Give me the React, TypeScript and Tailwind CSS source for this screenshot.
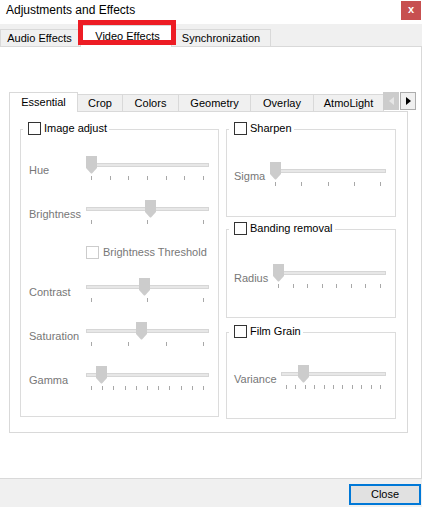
import React from 'react'

interface SliderProps {
  width: number
  widthClass: string
  value: number
  ticks: number
}

function Slider({ width, widthClass, value, ticks }: SliderProps) {
  const left = Math.round(value * (width - 11))
  return (
    <div className={`relative h-[25px] shrink-0 ${widthClass}`}>
      <div className="mt-[7px] h-[4px] border border-[#d6d6d6] bg-[#e7e7e7]" />
      <div className="absolute left-[5px] right-[5px] top-[20px] flex justify-between">
        {Array.from({ length: ticks }).map((_, i) => (
          <div key={i} className="h-[4px] w-px bg-[#a8a8a8]" />
        ))}
      </div>
      <svg className="absolute top-0" style={{ left }} width="11" height="18" viewBox="0 0 11 18">
        <polygon points="0,0 11,0 11,12 6,17.5 5,17.5 0,12" fill="#cccccc" />
      </svg>
    </div>
  )
}

function Row({
  label,
  labelClass,
  children,
}: {
  label: string
  labelClass: string
  children: React.ReactNode
}) {
  return (
    <div className="flex">
      <div className={`shrink-0 pt-[8px] leading-[13px] text-[#777777] ${labelClass}`}>{label}</div>
      {children}
    </div>
  )
}

function Check({ disabled }: { disabled?: boolean }) {
  return (
    <div
      className={`h-[13px] w-[13px] shrink-0 border bg-white ${
        disabled ? 'border-[#cccccc]' : 'border-[#333333]'
      }`}
    />
  )
}

function Group({
  title,
  className,
  children,
}: {
  title: string
  className: string
  children: React.ReactNode
}) {
  return (
    <div className={`relative border border-[#dcdcdc] ${className}`}>
      <div className="absolute -top-[8px] left-[2px] flex h-[13px] items-center gap-[3px] bg-white pl-[5px] pr-[2px]">
        <Check />
        <span className="leading-[13px] text-black">{title}</span>
      </div>
      {children}
    </div>
  )
}

const innerTabs = [
  { name: 'Crop', w: 'w-[45px]' },
  { name: 'Colors', w: 'w-[56px]' },
  { name: 'Geometry', w: 'w-[72px]' },
  { name: 'Overlay', w: 'w-[63px]' },
  { name: 'AtmoLight', w: 'w-[70px]' },
]

export default function App() {
  return (
    <div className="relative flex h-[507px] w-[422px] flex-col overflow-hidden bg-[#f0f0f0] font-['Liberation_Sans',Arial,sans-serif] text-[11px] text-black">
      {/* Title bar */}
      <div className="flex h-[24px] shrink-0 items-start justify-between bg-white pt-[1px]">
        <div className="pl-[6px] pt-[2px] text-[12px] leading-[15px] text-black">Adjustments and Effects</div>
        <div className="mr-[1px] flex h-[19px] w-[20px] items-center justify-center bg-[#c75050] pb-[2px] text-[11px] font-bold leading-none text-white">
          x
        </div>
      </div>

      {/* Top tabs */}
      <div className="flex h-[22px] shrink-0 items-end">
        <div className="flex h-[17px] w-[79px] items-center justify-center border-x border-t border-[#d9d9d9] bg-[#f0f0f0]">
          Audio Effects
        </div>
        <div className="relative z-10 -mb-px ml-px flex h-[22px] w-[92px] items-start justify-center border-x border-t border-[#d9d9d9] bg-white pl-[3px] pt-[4px] leading-[13px]">
          Video Effects
        </div>
        <div className="flex h-[17px] w-[99px] items-center justify-center border-r border-t border-[#d9d9d9] bg-[#f0f0f0]">
          Synchronization
        </div>
      </div>

      {/* Red highlight */}
      <div className="absolute left-[78px] top-[20px] z-20 h-[25px] w-[98px] border-[5px] border-[#ed1c24]" />

      {/* Main panel */}
      <div className="flex h-[433px] shrink-0 flex-col border-y border-r border-[#d9d9d9] bg-white pl-[9px] pt-[45px]">
        {/* Inner tabs */}
        <div className="flex h-[19px] items-end">
          <div className="relative z-10 -mb-px flex h-[20px] w-[69px] items-start justify-center border-x border-t border-[#d9d9d9] bg-white pt-[3px] leading-[13px]">
            Essential
          </div>
          {innerTabs.map((t) => (
            <div
              key={t.name}
              className={`flex h-[17px] items-center justify-center border-r border-t border-[#d9d9d9] bg-[#f0f0f0] ${t.w}`}
            >
              {t.name}
            </div>
          ))}
          <div className="mb-px ml-[-1px] flex h-[18px] w-[16px] items-center justify-center bg-[#cccccc]">
            <svg width="5" height="8" viewBox="0 0 5 8">
              <polygon points="5,0 5,8 0,4" fill="#e6e6e6" />
            </svg>
          </div>
          <div className="mb-px ml-px flex h-[18px] w-[16px] items-center justify-center border border-[#adadad] bg-[#f0f0f0]">
            <svg width="5" height="8" viewBox="0 0 5 8">
              <polygon points="0,0 0,8 5,4" fill="#000000" />
            </svg>
          </div>
        </div>

        {/* Pane */}
        <div className="flex h-[322px] w-[399px] gap-[7px] border border-[#d9d9d9] pl-[10px] pt-[17px]">
          {/* Left group */}
          <Group title="Image adjust" className="h-[288px] w-[199px] shrink-0">
            <div className="flex flex-col gap-[19px] pl-[8px] pt-[26px]">
              <Row label="Hue" labelClass="w-[57px]">
                <Slider width={123} widthClass="w-[123px]" value={0} ticks={7} />
              </Row>
              <Row label="Brightness" labelClass="w-[57px]">
                <Slider width={123} widthClass="w-[123px]" value={0.527} ticks={3} />
              </Row>
              <div className="mt-[2px] flex items-center gap-[4px] pl-[57px]">
                <Check disabled />
                <span className="leading-[13px] text-[#777777]">Brightness Threshold</span>
              </div>
              <Row label="Contrast" labelClass="w-[57px]">
                <Slider width={123} widthClass="w-[123px]" value={0.473} ticks={3} />
              </Row>
              <Row label="Saturation" labelClass="w-[57px]">
                <Slider width={123} widthClass="w-[123px]" value={0.446} ticks={4} />
              </Row>
              <Row label="Gamma" labelClass="w-[57px]">
                <Slider width={123} widthClass="w-[123px]" value={0.09} ticks={11} />
              </Row>
            </div>
          </Group>

          {/* Right groups */}
          <div className="flex w-[170px] shrink-0 flex-col">
            <Group title="Sharpen" className="h-[88px]">
              <div className="pl-[7px] pt-[32px]">
                <Row label="Sigma" labelClass="w-[36px]">
                  <Slider width={116} widthClass="w-[116px]" value={0} ticks={5} />
                </Row>
              </div>
            </Group>
            <Group title="Banding removal" className="mt-[12px] h-[89px]">
              <div className="pl-[7px] pt-[34px]">
                <Row label="Radius" labelClass="w-[39px]">
                  <Slider width={113} widthClass="w-[113px]" value={0} ticks={8} />
                </Row>
              </div>
            </Group>
            <Group title="Film Grain" className="mt-[14px] h-[87px]">
              <div className="pl-[7px] pt-[32px]">
                <Row label="Variance" labelClass="w-[47px]">
                  <Slider width={105} widthClass="w-[105px]" value={0.18} ticks={11} />
                </Row>
              </div>
            </Group>
          </div>
        </div>
      </div>

      {/* Bottom bar */}
      <div className="flex flex-1 items-start justify-end pt-[5px]">
        <div className="mr-[1px] flex h-[21px] w-[72px] items-center justify-center border-2 border-[#0078d7] bg-[#e1e1e1]">
          Close
        </div>
      </div>
    </div>
  )
}
